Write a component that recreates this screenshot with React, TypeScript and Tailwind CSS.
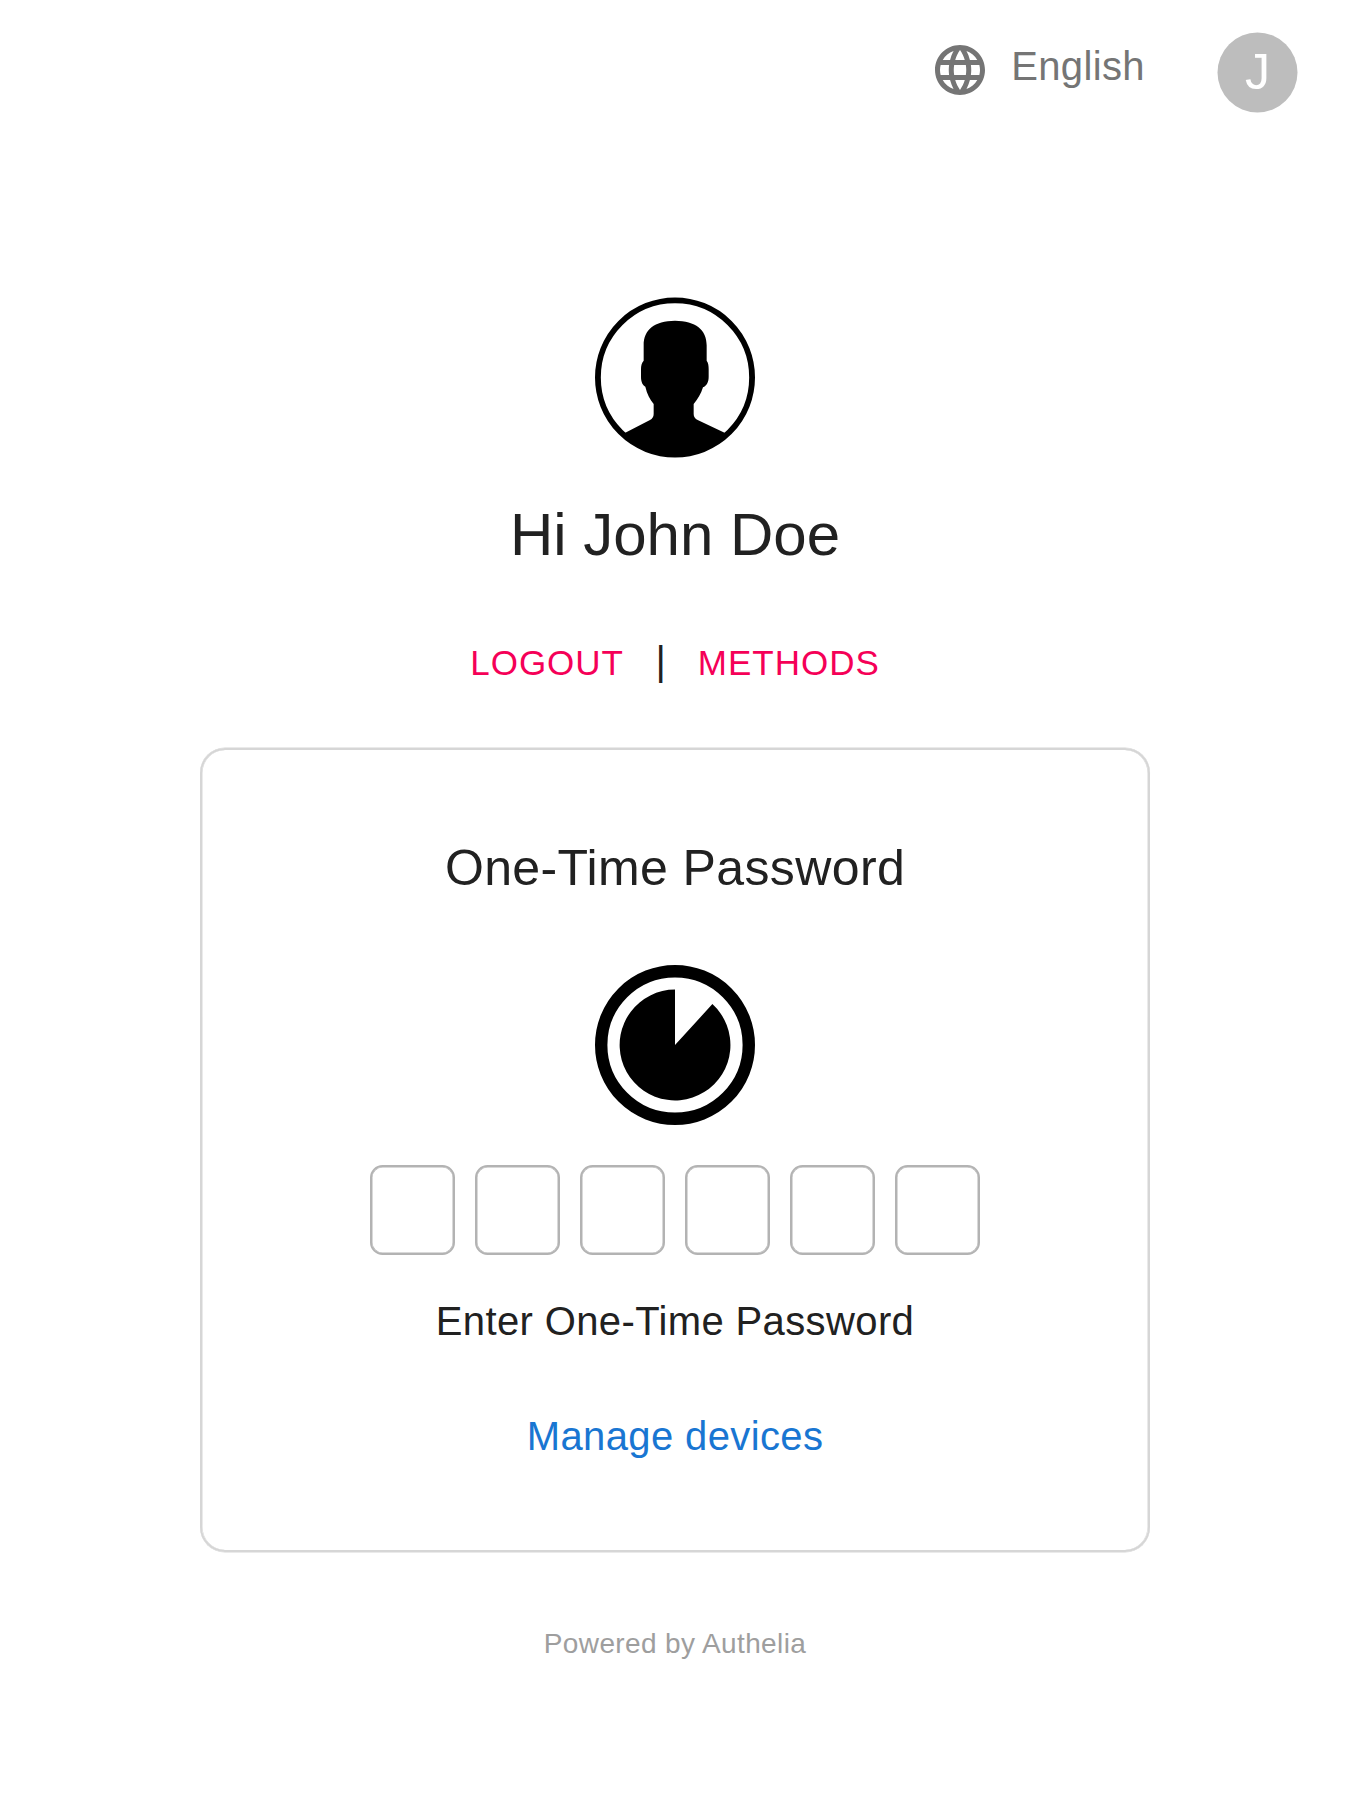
function GlobeIcon() {
  return (
    <svg viewBox="0 0 24 24" className="h-[60px] w-[60px]" fill="currentColor" aria-hidden="true">
      <path d="M11.99 2C6.47 2 2 6.48 2 12s4.47 10 9.99 10C17.52 22 22 17.52 22 12S17.52 2 11.99 2m6.93 6h-2.95c-.32-1.25-.78-2.45-1.38-3.56 1.84.63 3.37 1.91 4.33 3.56M12 4.04c.83 1.2 1.48 2.53 1.91 3.96h-3.82c.43-1.43 1.08-2.76 1.91-3.96M4.26 14C4.1 13.36 4 12.69 4 12s.1-1.36.26-2h3.38c-.08.66-.14 1.32-.14 2s.06 1.34.14 2zm.82 2h2.95c.32 1.25.78 2.45 1.38 3.56-1.84-.63-3.37-1.9-4.33-3.56m2.95-8H5.08c.96-1.66 2.49-2.93 4.33-3.56C8.81 5.55 8.35 6.75 8.03 8M12 19.96c-.83-1.2-1.48-2.53-1.91-3.96h3.82c-.43 1.43-1.08 2.76-1.91 3.96M14.34 14H9.66c-.09-.66-.16-1.32-.16-2s.07-1.35.16-2h4.68c.09.65.16 1.32.16 2s-.07 1.34-.16 2m.25 5.56c.6-1.11 1.06-2.31 1.38-3.56h2.95c-.96 1.65-2.49 2.93-4.33 3.56M16.36 14c.08-.66.14-1.32.14-2s-.06-1.34-.14-2h3.38c.16.64.26 1.31.26 2s-.1 1.36-.26 2z" />
    </svg>
  );
}

function UserIcon() {
  return (
    <svg viewBox="45 51 480 483" className="h-[161px] w-[160px]" aria-hidden="true">
      <circle cx="285" cy="292.5" r="231.25" fill="none" stroke="#000" strokeWidth="17.5" />
      <path d="M285 122C223 123 191 149 191 196V242C185 249 183 256 183 268V290C183 306 188 315 196 320C201 342 210 358 221 372V402C221 411 217 416 210 420L130 461A230 230 0 0 0 440 461L353 420C345 416 341 411 341 402V372C353 358 363 342 369 322C380 317 386 306 386 290V268C386 256 385 249 380 242V196C380 149 347 123 285 122Z" />
    </svg>
  );
}

function TimerIcon() {
  return (
    <svg viewBox="0 0 160 160" className="h-[160px] w-[160px]" aria-hidden="true">
      <circle cx="80" cy="80" r="73.8" fill="none" stroke="#000" strokeWidth="12.4" />
      <path d="M80 80V24.6A55.4 55.4 0 1 0 117.4 39.1Z" />
    </svg>
  );
}

function OtpInput() {
  return (
    <div className="mt-10 flex justify-center gap-5">
      {[1, 2, 3, 4, 5, 6].map((digit) => (
        <input
          key={digit}
          type="tel"
          maxLength={1}
          aria-label={`Digit ${digit}`}
          className="h-[90px] w-[85px] rounded-[12.5px] border-2 border-[#b3b3b3] text-center text-[40px] shadow-[inset_0_0_0_0.5px_#b3b3b3] outline-none"
        />
      ))}
    </div>
  );
}

export default function App() {
  return (
    <div className="flex h-[1800px] w-[1350px] flex-col items-center bg-white font-['Liberation_Sans',sans-serif] text-[#212121]">
      <header className="flex w-full items-start justify-end pr-[53px]">
        <button className="mr-[72px] flex items-start text-[#757575]">
          <span className="mt-10">
            <GlobeIcon />
          </span>
          <span className="mt-9 ml-[21px] text-[40px] leading-[60px] tracking-[0.00938em]">English</span>
        </button>
        <div className="mt-8 flex h-20 w-20 translate-x-[0.5px] translate-y-[0.5px] items-center justify-center rounded-full bg-[#bdbdbd] pb-0.5 text-[50px] leading-[50px] text-white">
          J
        </div>
      </header>

      <main className="mt-[185px] flex w-[950px] flex-col items-center">
        <UserIcon />
        <h1 className="mt-[37px] text-[60px] leading-[80px]">Hi John Doe</h1>
        <nav className="mt-[58px] flex items-start text-[35px] leading-[60px] tracking-[0.02857em]">
          <button className="text-[#f50057]">LOGOUT</button>
          <span className="mx-[31.5px] text-[40px] leading-[56px] tracking-[0.00938em]">|</span>
          <button className="text-[#f50057]">METHODS</button>
        </nav>

        <section className="mt-[55px] flex h-[804px] w-full flex-col items-center rounded-[25px] border-2 border-[#d6d6d6] shadow-[0_0.5px_0_#d6d6d6,0_-0.5px_0_#d6d6d6,inset_0.5px_0_0_#d6d6d6,inset_-0.5px_0_0_#d6d6d6]">
          <h2 className="mt-[78px] text-[50px] leading-[80px] tracking-[0.0075em]">One-Time Password</h2>
          <div className="mt-[57px]">
            <TimerIcon />
          </div>
          <OtpInput />
          <p className="mt-9 text-[40px] leading-[60px] tracking-[0.00938em]">Enter One-Time Password</p>
          <a href="#" className="mt-[55px] text-[40px] leading-[60px] tracking-[0.00938em] text-[#1976d2]">
            Manage devices
          </a>
        </section>
      </main>

      <footer className="mt-[72px] text-[28px] leading-[40px] tracking-[0.375px] text-[#9e9e9e]">
        Powered by Authelia
      </footer>
    </div>
  );
}
